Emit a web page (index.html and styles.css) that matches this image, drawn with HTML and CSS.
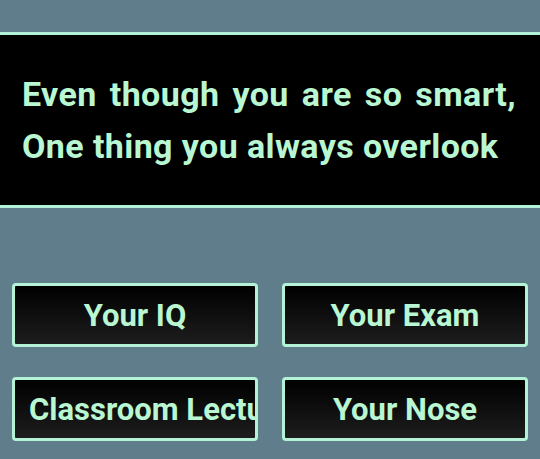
FILE: index.html
```html
<!DOCTYPE html>
<html lang="en">
<head>
<meta charset="utf-8">
<title>Quiz</title>
<link rel="stylesheet" href="styles.css">
</head>
<body>
<div class="screen">
  <section class="question">
    <p class="question-text">Even though you are so smart, One thing you always overlook</p>
  </section>
  <div class="answers">
    <button class="answer">Your IQ</button>
    <button class="answer">Your Exam</button>
    <button class="answer">Classroom Lecture</button>
    <button class="answer">Your Nose</button>
  </div>
</div>
</body>
</html>
```
FILE: styles.css
```css
html, body {
  margin: 0;
  padding: 0;
  background: #607d8b;
}
.screen {
  width: 540px;
  height: 459px;
  overflow: hidden;
  padding-top: 32px;
  box-sizing: border-box;
  font-family: Roboto, "Noto Sans", sans-serif;
}
.question {
  background: #000;
  border-top: 3px solid #b4f2d8;
  border-bottom: 3px solid #b4f2d8;
  padding: 33px 24px 33px 22px;
}
.question-text {
  margin: 0;
  color: #b9f6d2;
  font-size: 34px;
  font-weight: 700;
  letter-spacing: 0.4px;
  line-height: 52px;
  text-align: justify;
}
.answers {
  display: grid;
  grid-template-columns: 1fr 1fr;
  column-gap: 24px;
  row-gap: 30px;
  padding: 75px 12px 0;
}
.answer {
  height: 64px;
  margin: 0;
  padding: 0 14px;
  border: 3px solid #b4f2d8;
  border-radius: 4px;
  background: linear-gradient(to bottom, #000 0%, #1d1d1d 100%);
  color: #b9f6d2;
  font-family: Roboto, "Noto Sans", sans-serif;
  font-size: 31px;
  font-weight: 700;
  white-space: nowrap;
  overflow: hidden;
  text-align: center;
  display: block;
  width: 100%;
}
```
